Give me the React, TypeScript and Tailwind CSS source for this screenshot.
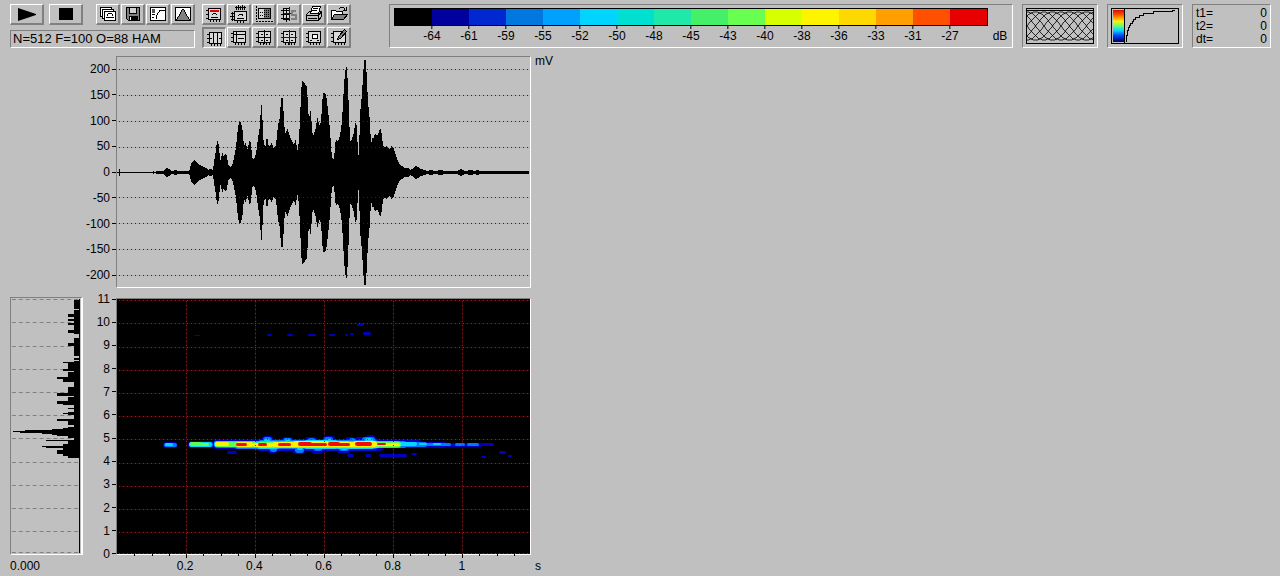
import { useState, type ReactNode } from "react"

const legend = [
  { color: "bg-black", label: "-64" },
  { color: "bg-[#00009c]", label: "-61" },
  { color: "bg-[#0028d0]", label: "-59" },
  { color: "bg-[#0078e0]", label: "-55" },
  { color: "bg-[#00a0ff]", label: "-52" },
  { color: "bg-[#00d4ff]", label: "-50" },
  { color: "bg-[#00e0d0]", label: "-48" },
  { color: "bg-[#20e8a8]", label: "-45" },
  { color: "bg-[#44f068]", label: "-43" },
  { color: "bg-[#68ff50]", label: "-40" },
  { color: "bg-[#d8ff00]", label: "-38" },
  { color: "bg-[#fff400]", label: "-36" },
  { color: "bg-[#ffd800]", label: "-33" },
  { color: "bg-[#ffa000]", label: "-31" },
  { color: "bg-[#ff5000]", label: "-27" },
  { color: "bg-[#e80000]", label: "" },
]

const amplitudes = [200, 150, 100, 50, 0, -50, -100, -150, -200]
const frequencies = [11, 10, 9, 8, 7, 6, 5, 4, 3, 2, 1, 0]
const times = ["0.2", "0.4", "0.6", "0.8", "1"]

const ampLines = [12, 38, 64, 90, 140, 166, 192, 218]
const freqLines = [1, 24, 48, 71, 94, 117, 140, 164, 187, 210, 233, 254]
const timeLines = [69, 138, 207, 276, 345]

// [x, amplitude] in plot pixels
const envelope = [
  [0, 0], [2, 0], [2, 3], [3, 3], [3, 0], [35, 0], [36, 1], [38, 0], [40, 1], [46, 1], [48, 3], [50, 4], [52, 3], [54, 1], [59, 2], [61, 1],
  [72, 1], [73, 3], [74, 8], [77, 12], [79, 10], [81, 8], [85, 6], [89, 4], [91, 2], [93, 3], [96, 2], [97, 10],
  [98, 15], [99, 22], [100, 31], [101, 31], [102, 26], [103, 12], [104, 11], [105, 20], [106, 18], [107, 15], [108, 18], [110, 16], [111, 8],
  [113, 5], [115, 6], [117, 14], [119, 24], [120, 36], [122, 50], [124, 50], [125, 44], [126, 40], [127, 22], [128, 31], [130, 24], [131, 22], [132, 31],
  [134, 30], [135, 14], [137, 12], [139, 18], [141, 34], [143, 46], [144, 68], [145, 66], [146, 38], [147, 27], [148, 26],
  [149, 26], [150, 40], [151, 27], [152, 26], [154, 28], [155, 30], [156, 24], [159, 27], [161, 47], [163, 55], [164, 74], [166, 74],
  [167, 48], [169, 36], [170, 45], [171, 42], [173, 35], [177, 27], [179, 33], [180, 22], [181, 22], [182, 34], [183, 52],
  [184, 78], [185, 91], [186, 91], [188, 88], [190, 85], [191, 66], [192, 50], [193, 61], [194, 61], [195, 42], [196, 36], [197, 38],
  [199, 44], [200, 54], [201, 54], [202, 46], [204, 50], [205, 66], [206, 79], [209, 78], [210, 70], [211, 62], [213, 42], [214, 26],
  [215, 14], [216, 13], [217, 12], [218, 26], [219, 34], [220, 31], [222, 32], [224, 42], [225, 52], [226, 68], [227, 88], [229, 106],
  [230, 104], [231, 84], [232, 60], [233, 30], [235, 33], [237, 40], [238, 48], [239, 50], [240, 44], [241, 17], [242, 16], [243, 58],
  [245, 78], [246, 96], [247, 110], [248, 114], [249, 110], [250, 90], [251, 70], [253, 50], [254, 26], [255, 34], [257, 34], [258, 40], [259, 37], [261, 37],
  [263, 43], [264, 42], [265, 36], [266, 26], [268, 24], [269, 26], [270, 26], [271, 24], [273, 22], [274, 26], [277, 23], [279, 16], [281, 11], [283, 7],
  [285, 6], [287, 4], [291, 4], [293, 2], [295, 3], [297, 5], [299, 6], [301, 5], [304, 3], [307, 2], [310, 1], [314, 2], [318, 1], [324, 2], [327, 1],
  [340, 1], [344, 3], [348, 1], [354, 2], [358, 1], [360, 2], [363, 1], [380, 1], [384, 1], [412, 1],
]

const envelopePath =
  "M" +
  envelope.map(([x, a]) => `${x},${115 - a}`).join("L") +
  "L" +
  [...envelope].reverse().map(([x, a]) => `${x},${116 + a}`).join("L") +
  "Z"

// [y, height, bar length]
const spectrum = [
  [2, 9, 6], [12, 24, 6], [16, 3, 12], [21, 2, 12], [25, 2, 12], [32, 3, 12], [40, 18, 6], [45, 3, 12], [60, 2, 6],
  [63, 96, 6], [64, 1, 17], [65, 7, 12], [71, 2, 17], [74, 5, 12], [79, 2, 23], [81, 3, 17], [89, 7, 12], [95, 3, 23],
  [99, 4, 12], [103, 3, 23], [106, 1, 17], [110, 1, 12], [114, 3, 12], [115, 1, 17], [121, 2, 23], [123, 4, 12],
  [129, 3, 12], [130, 2, 17], [131, 2, 28], [132, 1, 56], [133, 1, 68], [134, 1, 61], [135, 1, 39], [136, 1, 28],
  [137, 1, 23], [138, 2, 12], [142, 1, 34], [143, 3, 12], [146, 2, 17], [148, 1, 39], [149, 1, 34], [150, 3, 17],
  [152, 4, 23], [156, 2, 17], [158, 2, 12],
]

// each layer: color and list of [x, y, width, height] blobs
const heat: { color: string; blobs: number[][] }[] = [
  {
    color: "#0000c0",
    blobs: [
      [46, 143, 14, 6], [71, 142, 26, 7], [95, 141, 32, 9], [115, 141, 34, 9], [138, 140, 130, 12], [255, 141, 50, 8], [300, 143, 30, 6],
      [325, 144, 40, 4], [364, 144, 13, 3], [145, 137, 11, 6], [165, 138, 11, 6], [188, 138, 12, 4], [206, 137, 12, 5], [228, 138, 9, 6],
      [238, 138, 22, 6], [249, 136, 9, 7], [151, 149, 9, 5], [176, 149, 12, 6], [195, 150, 11, 5], [220, 150, 13, 4], [110, 152, 10, 3],
      [230, 155, 7, 3], [248, 155, 6, 3], [262, 155, 17, 3], [278, 155, 12, 3], [294, 154, 6, 2], [364, 157, 5, 2], [382, 152, 7, 3], [391, 156, 4, 2],
      [150, 35, 5, 2], [170, 35, 6, 2], [191, 35, 8, 2], [212, 35, 6, 2], [228, 35, 3, 2], [233, 34, 4, 2], [246, 33, 8, 3], [240, 25, 7, 2], [78, 36, 5, 1],
    ],
  },
  {
    color: "#0078ff",
    blobs: [
      [47, 144, 13, 4], [72, 143, 24, 5], [97, 142, 27, 7], [117, 142, 28, 8], [140, 141, 122, 9], [146, 138, 9, 6], [166, 139, 9, 5],
      [190, 139, 9, 8], [207, 138, 9, 6], [232, 139, 7, 6], [245, 138, 13, 6], [153, 148, 7, 5], [178, 148, 9, 6], [197, 147, 8, 5], [222, 147, 10, 5],
      [258, 142, 32, 7], [286, 143, 24, 5], [308, 144, 26, 3], [338, 144, 10, 3], [350, 144, 12, 3],
    ],
  },
  {
    color: "#00d8ff",
    blobs: [
      [48, 144, 8, 3], [72, 143, 23, 5], [97, 142, 26, 6], [118, 142, 24, 7], [139, 142, 24, 8], [160, 142, 30, 7], [186, 141, 36, 9], [218, 142, 40, 8],
      [250, 142, 34, 7], [280, 143, 20, 4], [302, 144, 8, 2], [316, 144, 8, 2], [147, 140, 6, 4], [168, 140, 5, 4], [209, 140, 6, 4], [248, 139, 8, 5],
      [180, 147, 6, 4], [224, 147, 6, 4],
    ],
  },
  {
    color: "#60ff50",
    blobs: [[73, 143, 12, 4], [84, 144, 8, 3], [98, 143, 20, 5], [116, 143, 24, 5], [140, 143, 20, 6], [158, 143, 40, 6], [194, 142, 40, 7], [230, 143, 32, 6], [258, 143, 26, 5]],
  },
  {
    color: "#fff000",
    blobs: [[98, 143, 14, 4], [119, 143, 17, 5], [136, 144, 20, 4], [155, 143, 24, 5], [176, 142, 36, 6], [208, 143, 30, 5], [236, 142, 24, 6], [256, 144, 27, 3]],
  },
  {
    color: "#f01000",
    blobs: [
      [119, 144, 11, 3], [141, 144, 9, 3], [161, 144, 13, 3], [181, 143, 14, 4], [192, 144, 18, 3], [211, 143, 12, 4],
      [220, 144, 13, 3], [238, 143, 17, 4], [260, 144, 9, 2],
    ],
  },
]

function windowCurve(shift: number) {
  const points = []
  for (let x = 0; x <= 66; x++) {
    const y = 18 - 14 * Math.cos(((x - shift) / 68) * Math.PI * 2)
    points.push(`${x + 1},${Math.round(y)}`)
  }
  return points.join(" ")
}

/* Toolbar icons */

const Frame = () => (
  <>
    <path d="M3.5 3.5h12v11h-12z" fill="#d8d8d8" />
    <path d="M1 5.5h2M1 9.5h2M1 13.5h2M5.5 15v2M8.5 15v2M11.5 15v2M14.5 15v2" />
  </>
)

const icons: Record<string, ReactNode> = {
  "Copy image": (
    <>
      <path d="M1.5 2.5h11v9h-11z" fill="#fff" />
      <path d="M3.5 4.5h11v9h-11z" fill="#fff" />
      <path d="M5.5 6.5h11v9h-11z" fill="#fff" />
      <path d="M9 8.5h4M8.5 9v2M13.5 9v2M7 12.5h8" fill="none" />
    </>
  ),
  Save: (
    <>
      <path d="M2.5 2.5h13v13h-11l-2-2z" fill="#808080" />
      <path d="M5.5 2.5h7v6h-7z" fill="#d0d0d0" />
      <path d="M5.5 11.5h8v4h-8z" fill="#000" />
      <path d="M6.5 12v3" stroke="#fff" />
    </>
  ),
  Transfer: (
    <>
      <path d="M1.5 2.5h15v13h-15z" fill="#fff" />
      <path d="M3 4h3v4h-3z" fill="#555" stroke="none" />
      <path d="M7.5 14v-3l1-2 2-3 3-1h2M3 9.5h3M3 12.5h2" fill="none" />
    </>
  ),
  Envelope: (
    <>
      <path d="M1.5 2.5h15v13h-15z" fill="#fff" />
      <path d="M2 15l3-4 3-6h2l3 6 3 4z" fill="#808080" stroke="none" />
      <path d="M2 14.500h1M3.500 12v2M4.500 11v1M5.500 9v2M6.500 7v2M7.500 5v2M8 4.500h2M10.500 5v2M11.500 7v2M12.500 9v2M13.500 11v1M14.500 12v2M15 14.500h1" />
    </>
  ),
  "Mark peak": (
    <>
      <Frame />
      <path d="M5 5h9v2H5z" fill="#e00000" stroke="none" />
      <path d="M8 8.500h3M7.500 9v1M11.500 9v1M6 12.500h7" fill="none" />
    </>
  ),
  "Show waveform": (
    <>
      <path d="M4.500 6.500h12v9h-12z" fill="#d8d8d8" />
      <path d="M1 8.500h3M0 11.500h4M1 14.500h3M2.500 7v9M5 2.500h11M6.500 1v4M8.500 0v5M10.500 1v4M12.500 0v5M14.500 1v4M7 16v2M10.500 16v2M13.500 16v2" fill="none" />
      <path d="M9 9.500h4M8.500 10v1M12.500 10v1M7 13.500h7" />
    </>
  ),
  "Select area": (
    <>
      <path d="M3.500 3.500h12v10h-12z" fill="#d8d8d8" />
      <path d="M9 4h6v9H9z" fill="#707070" stroke="none" />
      <path d="M9 5.500h6M9 7.500h6M9 9.500h6M9 11.500h6M5 7.500h3M5 10.500h3" strokeDasharray="1 1" />
      <path d="M1.500 1v15.500h16" fill="none" strokeDasharray="2 1" />
    </>
  ),
  "Sync scale": (
    <>
      <path d="M3.500 3.500h6v11h-6z" fill="#d8d8d8" />
      <path d="M1 5.500h8M1 9.500h8M1 13.500h8M6.500 3v14" fill="none" />
      <path d="M9.500 2v14M4 8.500h7" stroke="#0000ff" />
      <path d="M16 6h-4v4h4v4h-5" fill="none" stroke="#808080" strokeWidth="2" />
    </>
  ),
  Print: (
    <>
      <path d="M1.500 9.500l3-3h12v5l-3 4h-12z" fill="#c0c0c0" />
      <path d="M5.500 8.500l2-7h8l-2 7z" fill="#fff" />
      <path d="M2 10.500h11l3-3M13.500 11v4M3 13.500h9M8 3.500h5M7 5.500h5" fill="none" />
    </>
  ),
  Open: (
    <>
      <path d="M1.500 14.500v-9h4l1 1h6v3" fill="#fff" />
      <path d="M1.500 14.500l3-5h13l-4 5z" fill="#808080" />
      <path d="M9 3.500h1M10 2.500h4M14.500 3v2M16.500 2v3M13 5.500h4" fill="none" />
    </>
  ),
  "Column cursor": (
    <>
      <Frame />
      <path d="M7.500 4v10M11.500 4v10M4 9.500h2M13 9.500h2" />
    </>
  ),
  "Row cursor": (
    <>
      <Frame />
      <path d="M6.500 4v10M4 6.500h11M8 10.500h6" />
    </>
  ),
  Crosshair: (
    <>
      <Frame />
      <path d="M9.500 2v14M3 9.500h13M6 6.500h2M11 6.500h2M6 12.500h2M11 12.500h2" />
    </>
  ),
  "Blue crosshair": (
    <>
      <Frame />
      <path d="M6 6.500h2M11 6.500h2M6 12.500h2M11 12.500h2" />
      <path d="M9.500 2v15M1 9.500h16" stroke="#0000ff" />
    </>
  ),
  "Box cursor": (
    <>
      <Frame />
      <path d="M7.500 6.500h5v4h-5z" fill="#fff" />
      <path d="M5 12.500h2M12 12.500h2" />
    </>
  ),
  Annotate: (
    <>
      <Frame />
      <path d="M7.500 11.500l1-3 6-7 2 2-6 7z" fill="#808080" />
    </>
  ),
}

const fileTools = ["Copy image", "Save", "Transfer", "Envelope"]
const viewTools = ["Mark peak", "Show waveform", "Select area", "Sync scale", "Print", "Open"]
const cursorTools = ["Column cursor", "Row cursor", "Crosshair", "Blue crosshair", "Box cursor", "Annotate"]

const raised = "border-t border-l border-b-2 border-r-2 border-t-white border-l-white border-b-[#808080] border-r-[#808080]"
const sunken = "border border-t-[#808080] border-l-[#808080] border-b-white border-r-white"

function ToolButton({ name, pressed, onClick }: { name: string; pressed?: boolean; onClick?: () => void }) {
  return (
    <button
      aria-label={name}
      onClick={onClick}
      className={`flex h-[21px] w-6 items-center justify-center ${
        pressed ? "border-t-2 border-l-2 border-b border-r border-t-[#808080] border-l-[#808080] border-b-white border-r-white" : raised
      }`}
    >
      <svg viewBox="0 0 18 18" className="h-[18px] w-[18px] shrink-0" stroke="#000" shapeRendering="crispEdges">
        {icons[name]}
      </svg>
    </button>
  )
}

function Legend() {
  return (
    <div className={`flex min-w-0 flex-1 pt-[3px] pl-1 ${sunken}`}>
      <div className="flex h-[18px] flex-1 border border-black">
        {legend.map((item) => (
          <div key={item.color} className={`relative flex-1 ${item.color}`}>
            {item.label && (
              <div className="absolute top-full left-full flex -translate-x-1/2 flex-col items-center">
                <span className="h-1 w-px bg-black" />
                <span className="leading-[14px]">{item.label}</span>
              </div>
            )}
          </div>
        ))}
      </div>
      <span className="w-6 pt-[21px] text-center leading-[14px]">dB</span>
    </div>
  )
}

function Axis({ values }: { values: number[] }) {
  return (
    <>
      {values.map((value) => (
        <div key={value} className="flex items-center justify-end gap-0.5">
          <span className="leading-[14px]">{value}</span>
          <span className="h-px w-1 bg-black" />
        </div>
      ))}
    </>
  )
}

function Waveform() {
  return (
    <svg viewBox="0 0 413 230" preserveAspectRatio="none" className="block h-[230px] w-full" shapeRendering="crispEdges">
      {ampLines.map((y) => (
        <path key={y} d={`M0 ${y}.5H413`} stroke="#cca4a4" />
      ))}
      <path d={envelopePath} />
      {ampLines.map((y) => (
        <path key={y} d={`M2 ${y}.5H413`} stroke="#900000" strokeDasharray="1 3" />
      ))}
    </svg>
  )
}

function Spectrogram() {
  const grid = [...freqLines.map((y) => `M2 ${y}.5H413`), ...timeLines.map((x) => `M${x}.5 2V255`)]

  return (
    <svg viewBox="0 0 413 255" preserveAspectRatio="none" className="block h-[255px] w-full bg-black">
      <defs>
        <filter id="soften">
          <feGaussianBlur stdDeviation=".6" />
        </filter>
      </defs>
      <g stroke="#380000" shapeRendering="crispEdges">
        {grid.map((d) => (
          <path key={d} d={d} />
        ))}
      </g>
      <g filter="url(#soften)">
        {heat.map((layer) => (
          <g key={layer.color} fill={layer.color}>
            {layer.blobs.map(([x, y, w, h], i) => (
              <rect key={i} x={x} y={y} width={w} height={h} rx={Math.min(w, h) / 2} />
            ))}
          </g>
        ))}
      </g>
      <g stroke="#a81818" strokeDasharray="1 3" shapeRendering="crispEdges">
        {grid.map((d) => (
          <path key={d} d={d} />
        ))}
      </g>
    </svg>
  )
}

function MeanSpectrum() {
  return (
    <svg viewBox="0 0 71 256" preserveAspectRatio="none" className="block h-[256px] w-full" shapeRendering="crispEdges">
      {freqLines.map((y) => (
        <path key={y} d={`M1 ${y}.5H69`} stroke="#808080" strokeDasharray="4 3" />
      ))}
      {spectrum.map(([y, h, length], i) => (
        <rect key={i} x={70 - length} y={y} width={length} height={h} />
      ))}
      <path d="M69.500 1V255" stroke="#000" />
    </svg>
  )
}

export default function App() {
  const [cursor, setCursor] = useState("Column cursor")

  return (
    <div className="min-h-screen bg-[#c0c0c0] pt-1 pr-[9px] pl-[10px] font-['Liberation_Sans',Arial,sans-serif] text-xs text-black">
      {/* Toolbar */}
      <header className="flex h-11 items-stretch">
        <div className="flex shrink-0 flex-col justify-between">
          <div className="flex">
            <button aria-label="Play" className={`mr-[5px] flex h-[21px] w-[34px] items-center justify-center ${raised}`}>
              <svg viewBox="0 0 18 13" className="h-[13px] w-[18px]">
                <path d="M0 0L18 6v1L0 13z" />
              </svg>
            </button>
            <button aria-label="Stop" className={`mr-[13px] flex h-[21px] w-[34px] items-center justify-center ${raised}`}>
              <span className="h-3 w-[14px] bg-black" />
            </button>
            <div className="flex gap-px">
              {fileTools.map((name) => (
                <ToolButton key={name} name={name} />
              ))}
            </div>
          </div>
          <div className={`flex h-[18px] items-center pl-0.5 text-[13px] leading-4 ${sunken}`}>N=512 F=100 O=88 HAM</div>
        </div>

        <div className="mr-[38px] ml-[7px] flex shrink-0 flex-col justify-between">
          <div className="flex gap-px">
            {viewTools.map((name) => (
              <ToolButton key={name} name={name} />
            ))}
          </div>
          <div className="flex gap-px">
            {cursorTools.map((name) => (
              <ToolButton key={name} name={name} pressed={cursor === name} onClick={() => setCursor(name)} />
            ))}
          </div>
        </div>

        <Legend />

        <div className="ml-[9px] flex shrink-0 gap-[9px]">
          <div className={`w-[76px] p-[3px] ${sunken}`}>
            <svg viewBox="0 0 68 36" className="h-9 w-[68px]" fill="none" stroke="#000">
              <path d="M.5.5h67v35h-67zM0 2.500h68" shapeRendering="crispEdges" />
              <g strokeWidth=".8">
                {[0, 1, 2, 3, 4, 5, 6, 7].map((i) => (
                  <polyline key={i} points={windowCurve(i * 8.5)} />
                ))}
              </g>
            </svg>
          </div>
          <div className={`w-[76px] p-[3px] ${sunken}`}>
            <svg viewBox="0 0 68 36" className="h-9 w-[68px]" fill="none" stroke="#000" shapeRendering="crispEdges">
              <defs>
                <linearGradient id="palette" x1="0" y1="0" x2="0" y2="1">
                  <stop offset="0" stopColor="#d01000" />
                  <stop offset=".15" stopColor="#ff5000" />
                  <stop offset=".35" stopColor="#fff000" />
                  <stop offset=".5" stopColor="#60ff80" />
                  <stop offset=".65" stopColor="#00d0ff" />
                  <stop offset=".8" stopColor="#0040ff" />
                  <stop offset="1" stopColor="#000050" />
                </linearGradient>
              </defs>
              <path d="M.5.5h67v35h-67z" />
              <rect x="2" y="2" width="11" height="32" fill="url(#palette)" stroke="none" />
              <path d="M13.500 1v34" />
              <path d="M15.500 34v-7h1v-5h1v-3h1v-2h1v-2h2v-2h1v-2h2v-2h4v-2h4v-2h10v-2h19v-1h2" />
            </svg>
          </div>
          <dl className={`w-[79px] px-[3px] py-0.5 leading-[13px] ${sunken}`}>
            {["t1=", "t2=", "dt="].map((name) => (
              <div key={name} className="flex justify-between">
                <dt>{name}</dt>
                <dd>0</dd>
              </div>
            ))}
          </dl>
        </div>
      </header>

      {/* Plots */}
      <main className="mt-2 grid grid-cols-[73px_33px_minmax(0,415fr)_minmax(0,740fr)]">
        <div className="col-start-2 flex flex-col justify-between py-[6px]">
          <Axis values={amplitudes} />
        </div>
        <div className={sunken}>
          <Waveform />
        </div>
        <span className="pl-1 leading-[11px]">mV</span>

        <div className="mt-[9px] self-start border border-t-[#808080] border-l-[#808080] border-r-2 border-b-white border-r-white">
          <MeanSpectrum />
        </div>
        <div className="mt-1 -mb-1.5 flex flex-col justify-between">
          <Axis values={frequencies} />
        </div>
        <div className={`mt-[10px] ${sunken}`}>
          <Spectrogram />
        </div>

        <span className="col-start-1 pt-1 leading-[14px]">0.000</span>
        <div className="col-start-3">
          <svg viewBox="0 0 415 4" preserveAspectRatio="none" className="-mt-px -mb-px block h-1 w-full" shapeRendering="crispEdges">
            <path d="M18.500 0v2M36.500 0v2M53.500 0v2M87.500 0v2M105.500 0v2M122.500 0v2M156.500 0v2M174.500 0v2M191.500 0v2M225.500 0v2M243.500 0v2M260.500 0v2M294.500 0v2M312.500 0v2M329.500 0v2M363.500 0v2M381.500 0v2M398.500 0v2" stroke="#000" />
            <path d="M70.500 0v4M139.500 0v4M208.500 0v4M277.500 0v4M346.500 0v4" stroke="#000" />
          </svg>
          <div className="flex pt-0.5 text-center leading-[14px]">
            <span className="flex-1" />
            {times.map((time) => (
              <span key={time} className="flex-[2]">
                {time}
              </span>
            ))}
            <span className="flex-1" />
          </div>
        </div>
        <span className="pt-1 pl-1 leading-[14px]">s</span>
      </main>
    </div>
  )
}
